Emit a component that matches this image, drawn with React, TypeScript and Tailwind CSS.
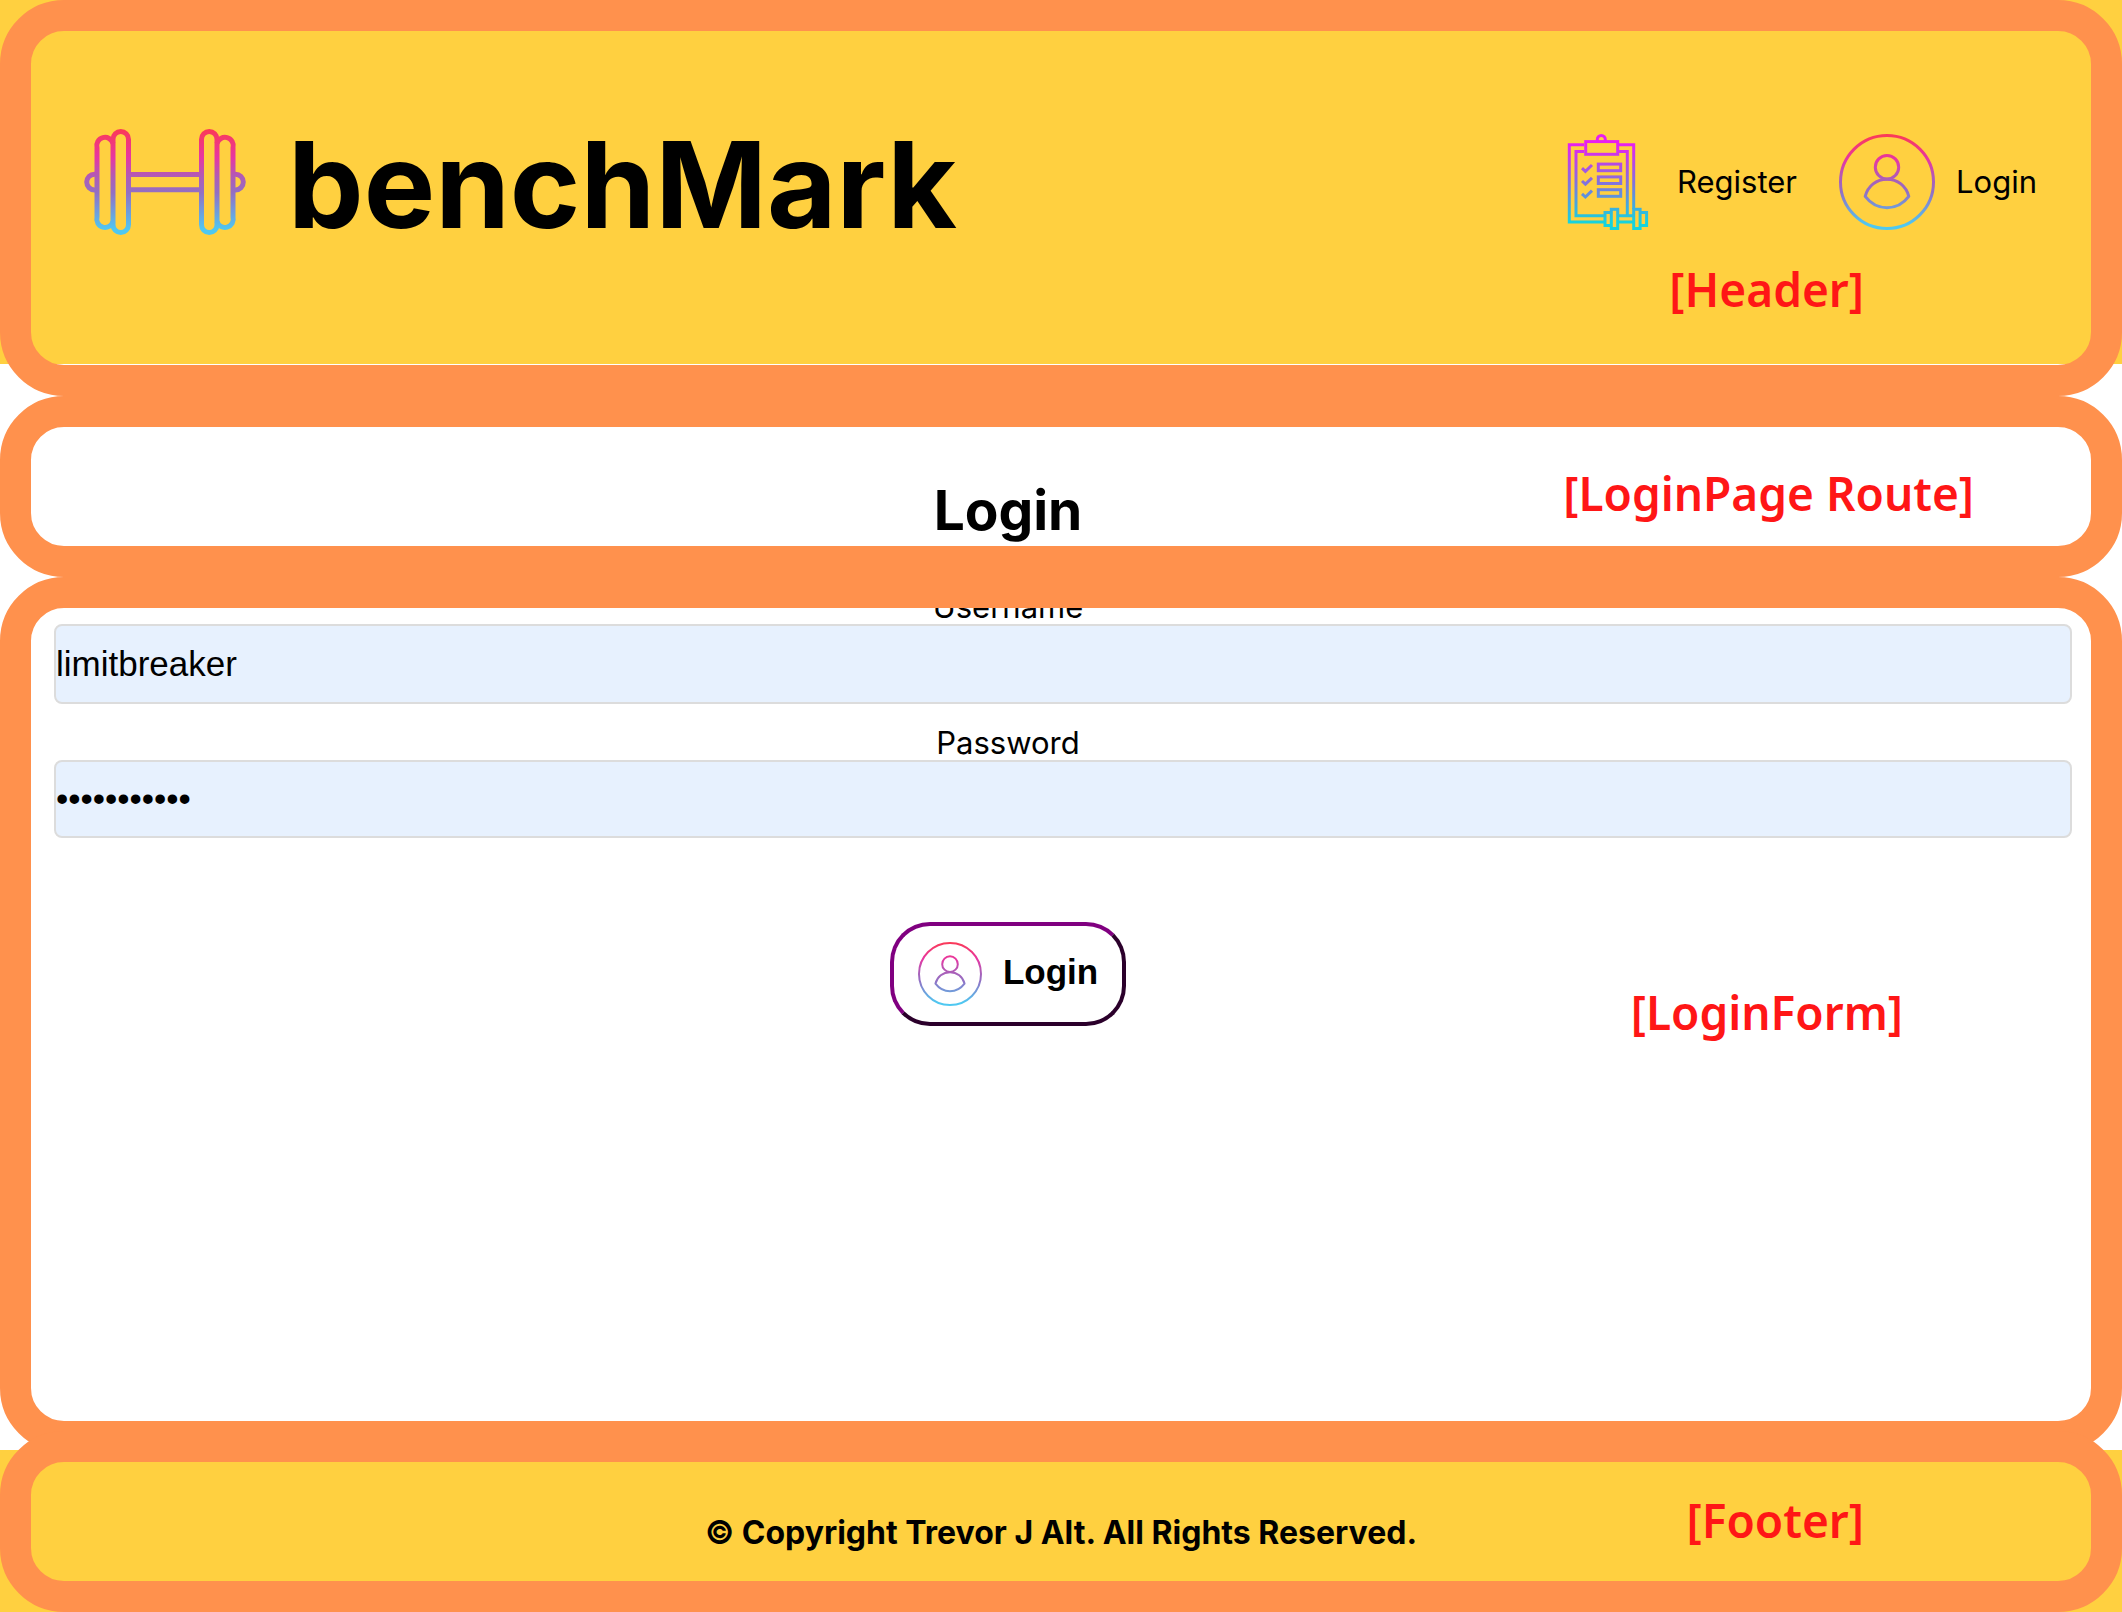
import React from "react";

const SUNSET_STOPS = (
  <>
    <stop offset="0" stopColor="#fb3a55" />
    <stop offset="0.27" stopColor="#e637a3" />
    <stop offset="0.45" stopColor="#b05bb6" />
    <stop offset="0.6" stopColor="#936fc3" />
    <stop offset="0.95" stopColor="#4fc8f1" />
  </>
);

function BarbellIcon() {
  return (
    <svg width="162" height="106" viewBox="0 0 162 106" fill="none" stroke="url(#barbell)" strokeWidth="5" aria-hidden="true">
      <defs>
        <linearGradient id="barbell" gradientUnits="userSpaceOnUse" x1="0" y1="0" x2="0" y2="106">
          {SUNSET_STOPS}
        </linearGradient>
      </defs>
      <rect x="29" y="2.5" width="15.5" height="101" rx="7.75" />
      <rect x="117.5" y="2.5" width="15.5" height="101" rx="7.75" />
      <path d="M29 14.5A7.8 7.8 0 0 0 13 18.8V88a7.8 7.8 0 0 0 16 4.3" />
      <path d="M133 14.5A7.8 7.8 0 0 1 149 18.8V88a7.8 7.8 0 0 1-16 4.3" />
      <path d="M13 45.3H10.5a7.8 7.8 0 0 0 0 15.6H13" />
      <path d="M149 45.3h2.5a7.8 7.8 0 0 1 0 15.6H149" />
      <path d="M44.5 45.4H117.5V60.8H44.5Z" />
    </svg>
  );
}

function UserIcon({ id, className }: { id: string; className: string }) {
  return (
    <svg className={className} viewBox="0 0 96 96" fill="none" stroke={`url(#${id})`} strokeWidth="3" strokeLinejoin="round" aria-hidden="true">
      <defs>
        <linearGradient id={id} gradientUnits="userSpaceOnUse" x1="0" y1="0" x2="0" y2="96">
          {SUNSET_STOPS}
        </linearGradient>
      </defs>
      <circle cx="48" cy="48" r="46.5" />
      <circle cx="48" cy="33.2" r="11.7" />
      <path d="M26.2 62.4C28.8 52 37.5 45.2 48 45.2S67.2 52 69.8 62.4C64.5 69.5 57 73.7 48 73.7S31.5 69.5 26.2 62.4Z" />
    </svg>
  );
}

function ClipboardIcon() {
  return (
    <svg className="size-24" viewBox="-7 0 96 96" fill="none" stroke="url(#clipboard)" strokeWidth="3" aria-hidden="true">
      <defs>
        <linearGradient id="clipboard" gradientUnits="userSpaceOnUse" x1="0" y1="0" x2="0" y2="96">
          <stop offset="0.1" stopColor="#e81ff0" />
          <stop offset="0.5" stopColor="#8570dd" />
          <stop offset="0.92" stopColor="#16d3dd" />
        </linearGradient>
      </defs>
      <path d="M17 10.7H2.3V88H37M52 10.7H66.7V75" />
      <path d="M17 17.4H9V81.7H37M52 17.4H60.3V81.7" />
      <rect x="18.7" y="7.6" width="32" height="12.7" />
      <path d="M30.3 7.5V5.5a4 4 0 0 1 8 0V7.5" />
      <path d="M15 34.2l3.4 3.2L25 31M15 47l3.4 3.2L25 43.8M15 59.8l3.4 3.2L25 56.6" />
      <rect x="31.3" y="30.1" width="22.4" height="6.6" />
      <rect x="31.3" y="42.9" width="22.4" height="6.6" />
      <rect x="31.3" y="55.7" width="22.4" height="6.6" />
      <rect x="44.3" y="75.3" width="6.4" height="19.2" />
      <rect x="66.7" y="75.3" width="6.4" height="19.2" />
      <path d="M44 78.4H38V91.5H44M73.4 78.4H79.6V91.5H73.4M51 81.7H66.5M51 88H66.5" />
    </svg>
  );
}

function Frame({ className, children }: { className: string; children: React.ReactNode }) {
  return (
    <div className={`relative overflow-hidden rounded-[64px] border-[31px] border-[#ff914d] ${className}`}>
      {children}
    </div>
  );
}

function Note({ className, children }: { className: string; children: React.ReactNode }) {
  return (
    <span className={`absolute whitespace-nowrap font-['Noto_Sans',sans-serif] text-[46px] leading-[48px] font-semibold text-[#ff1616] ${className}`}>
      {children}
    </span>
  );
}

const FIELD =
  "block w-full rounded-lg border-2 border-[#dcdcdc] bg-[#e7f1fe] font-['Liberation_Sans',Arial,sans-serif] text-[35px] leading-10 text-black outline-none";

export default function App() {
  return (
    <div className="flex min-h-screen flex-col bg-white font-[Inter,sans-serif] text-black">
      <header className="bg-[linear-gradient(#ffd040_364px,#fff_364px)]">
        <Frame className="flex items-center justify-between pt-[87px] pr-[54px] pb-[119px] pl-[53px]">
          <a href="#home" className="flex items-center gap-[42px]">
            <BarbellIcon />
            <h1 className="pt-[7px] pb-px text-[120px] leading-[120px] font-bold">benchMark</h1>
          </a>
          <nav className="flex items-center gap-[42px] text-[31px] leading-9">
            <a href="#register" className="flex items-center gap-[21px]">
              <ClipboardIcon />
              Register
            </a>
            <a href="#login" className="flex items-center gap-[21px]">
              <UserIcon id="nav-user" className="size-24" />
              Login
            </a>
          </nav>
          <Note className="right-[227px] bottom-[52px]">[Header]</Note>
        </Frame>
      </header>

      <main className="flex grow flex-col">
        <Frame className="pt-[47px] pr-[106px]">
          <h2 className="text-center text-[55px] leading-[72px] font-bold">Login</h2>
          <Note className="right-[117px] bottom-[29px]">[LoginPage Route]</Note>
        </Frame>

        <Frame className="grow pr-[19px] pl-[23px]">
          <form onSubmit={(e) => e.preventDefault()}>
            <label htmlFor="username" className="-mt-[19px] block pr-[110px] text-center text-[31px] leading-[35px]">
              Username
            </label>
            <input id="username" type="text" defaultValue="limitbreaker" className={`${FIELD} h-20`} />
            <label htmlFor="password" className="mt-[21px] block pr-[110px] text-center text-[31px] leading-[35px]">
              Password
            </label>
            <input id="password" type="password" defaultValue="benchpress1" className={`${FIELD} h-[78px]`} />
            <div className="mt-[84px] flex justify-center pr-[110px]">
              <button
                type="submit"
                className="flex items-center gap-[21px] rounded-[40px] border-4 border-t-[#800080] border-r-[#2b002b] border-b-[#2b002b] border-l-[#800080] px-6 py-4 font-['Liberation_Sans',Arial,sans-serif] text-[35px] leading-10 font-bold"
              >
                <UserIcon id="button-user" className="size-16" />
                <span className="pb-1">Login</span>
              </button>
            </div>
          </form>
          <Note className="right-[188px] bottom-[385px]">[LoginForm]</Note>
        </Frame>
      </main>

      <footer className="-mt-[21px] bg-[linear-gradient(transparent_19px,#ffd040_19px)]">
        <Frame className="pt-[51px] pb-7">
          <p className="text-center text-[32px] leading-10 font-bold">© Copyright Trevor J Alt. All Rights Reserved.</p>
          <Note className="right-[227px] bottom-[37px]">[Footer]</Note>
        </Frame>
      </footer>
    </div>
  );
}
